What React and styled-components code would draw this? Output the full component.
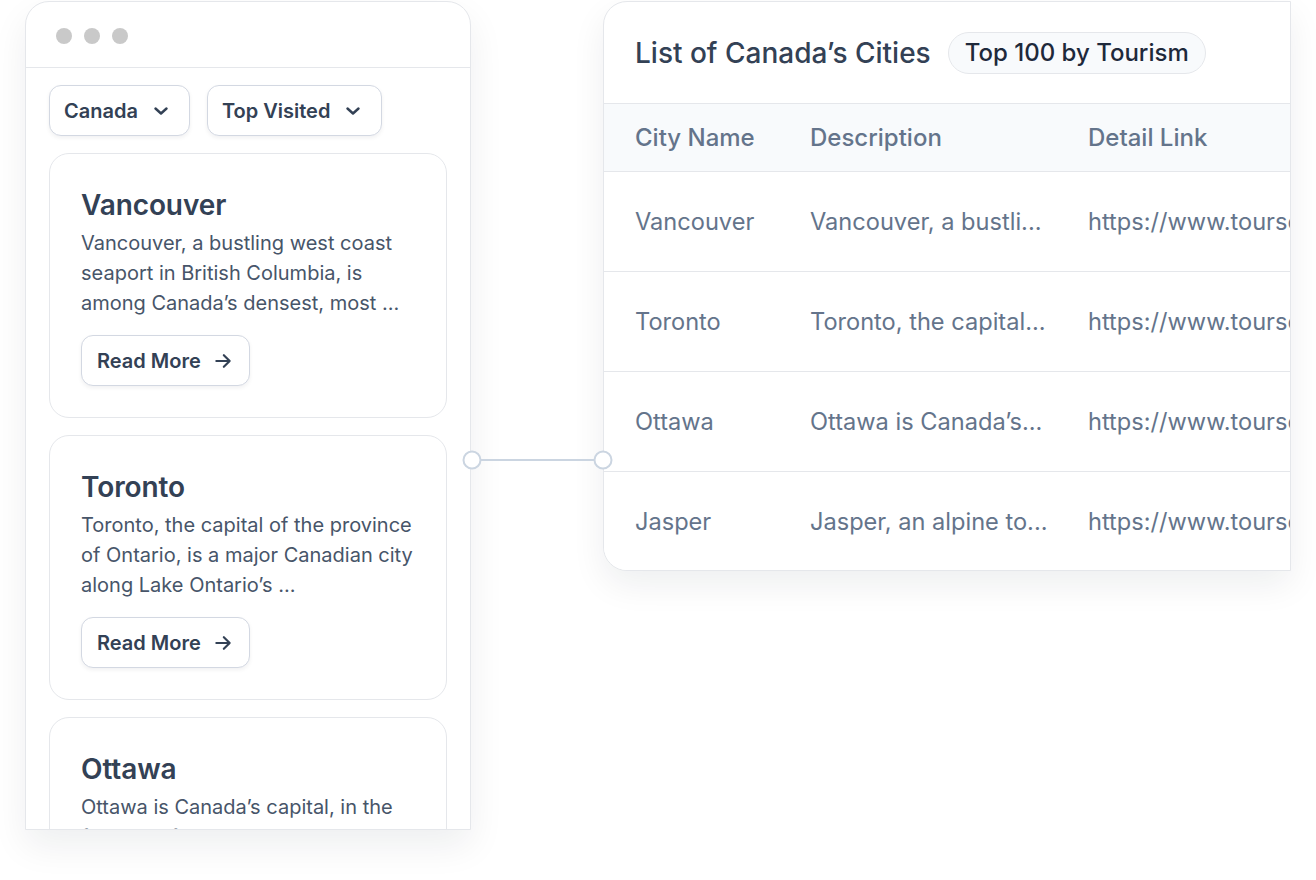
import React from "react";
import styled, { createGlobalStyle } from "styled-components";

const GlobalStyle = createGlobalStyle`
    html, body {
        margin: 0;
        padding: 0;
        background: #ffffff;
        font-family: Inter, "Noto Sans", "Liberation Sans", sans-serif;
        -webkit-font-smoothing: antialiased;
    }
`;

// layout
const Stage = styled.div`
    display: flex;
    align-items: flex-start;
    padding: 1px 0 0 25px;
    width: 1316px;
    height: 880px;
    box-sizing: border-box;
    overflow: hidden;
`;

// left mobile panel
const Phone = styled.section`
    flex: 0 0 446px;
    height: 829px;
    box-sizing: border-box;
    border: 1.5px solid #e5e7eb;
    border-radius: 24px 24px 0 0;
    background: #fff;
    box-shadow: 0 16px 36px rgba(15, 23, 42, 0.07);
    display: flex;
    flex-direction: column;
    overflow: hidden;
`;

const WindowBar = styled.div`
    height: 66px;
    flex: 0 0 66px;
    box-sizing: border-box;
    border-bottom: 1.5px solid #e5e7eb;
    display: flex;
    align-items: center;
    gap: 12px;
    padding: 2px 0 0 30px;
`;

const Dot = styled.span`
    width: 16px;
    height: 16px;
    border-radius: 50%;
    background: #c9c9c9;
`;

const Filters = styled.div`
    display: flex;
    gap: 17px;
    padding: 17px 23px 17px;
`;

const Dropdown = styled.button`
    display: flex;
    align-items: center;
    gap: 16px;
    height: 51px;
    padding: 0 21px 0 14px;
    border: 1.5px solid #d3d8e2;
    border-radius: 12px;
    background: #fff;
    box-shadow: 0 2px 4px rgba(15, 23, 42, 0.06);
    font-family: inherit;
    font-size: 20px;
    font-weight: 600;
    color: #334155;
`;

const CardList = styled.div`
    display: flex;
    flex-direction: column;
    gap: 17px;
    padding: 0 23px;
`;

const Card = styled.article`
    flex: 0 0 auto;
    border: 1.5px solid #e5e7eb;
    border-radius: 20px;
    padding: 33px 31px 31px;
    background: #fff;
`;

const CardTitle = styled.h3`
    margin: 0;
    font-size: 28px;
    line-height: 36px;
    font-weight: 600;
    color: #334155;
    letter-spacing: -0.1px;
`;

const CardText = styled.p`
    margin: 5px 0 0;
    font-size: 20px;
    line-height: 30px;
    color: #475569;
`;

const ReadMore = styled.button`
    margin-top: 17px;
    display: inline-flex;
    align-items: center;
    gap: 12px;
    height: 51px;
    padding: 0 16px 0 15px;
    border: 1.5px solid #d3d8e2;
    border-radius: 12px;
    background: #fff;
    box-shadow: 0 2px 4px rgba(15, 23, 42, 0.06);
    font-family: inherit;
    font-size: 20px;
    font-weight: 600;
    color: #334155;
`;

// connector
const Connector = styled.svg`
    flex: 0 0 auto;
    margin: 449px -13px 0 -9px;
    position: relative;
    z-index: 2;
    overflow: visible;
`;

// right table panel
const TablePanel = styled.section`
    flex: 0 0 688px;
    height: 570px;
    box-sizing: border-box;
    border: 1.5px solid #e5e7eb;
    border-radius: 24px 0 0 24px;
    background: #fff;
    box-shadow: 0 14px 34px rgba(15, 23, 42, 0.07);
    overflow: hidden;
`;

const TableHead = styled.div`
    height: 101px;
    box-sizing: border-box;
    display: flex;
    align-items: center;
    gap: 17px;
    padding: 0 31px;
`;

const TableTitle = styled.h2`
    margin: 0;
    font-size: 28px;
    font-weight: 500;
    color: #334155;
    white-space: nowrap;
`;

const Pill = styled.span`
    display: inline-flex;
    align-items: center;
    height: 42px;
    box-sizing: border-box;
    padding: 0 16px;
    border: 1.5px solid #e5e7eb;
    border-radius: 999px;
    background: #f8fafc;
    font-size: 24px;
    font-weight: 500;
    color: #1e293b;
    white-space: nowrap;
`;

const Row = styled.div`
    display: grid;
    grid-template-columns: 175px 278px 1fr;
    align-items: center;
    height: ${(p) => (p.$head ? "68px" : "100px")};
    box-sizing: border-box;
    padding-left: 31px;
    border-top: 1.5px solid #e5e7eb;
    background: ${(p) => (p.$head ? "#f8fafc" : "#fff")};
    font-size: ${(p) => (p.$head ? "24px" : "23.6px")};
    font-weight: ${(p) => (p.$head ? 500 : 400)};
    color: #64748b;
    white-space: nowrap;
    overflow: hidden;
`;

const Cell = styled.span`
    overflow: hidden;
`;

const Chevron = () => (
    <svg width="14" height="8" viewBox="0 0 14 8" fill="none" stroke="#334155" strokeWidth="2.4" strokeLinecap="round" strokeLinejoin="round">
        <path d="M1.5 1.5l5.5 5 5.5-5" />
    </svg>
);

const Arrow = () => (
    <svg width="20" height="20" viewBox="0 0 24 24" fill="none" stroke="#334155" strokeWidth="2.6" strokeLinecap="round" strokeLinejoin="round">
        <path d="M4 12h16M13 5l7 7-7 7" />
    </svg>
);

const cards = [
    {
        title: "Vancouver",
        text: "Vancouver, a bustling west coast seaport in British Columbia, is among Canada’s densest, most ...",
    },
    {
        title: "Toronto",
        text: "Toronto, the capital of the province of Ontario, is a major Canadian city along Lake Ontario’s ...",
    },
    {
        title: "Ottawa",
        text: "Ottawa is Canada’s capital, in the far east of southern Ontario, near the city of Montréal ...",
    },
];

const rows = [
    ["Vancouver", "Vancouver, a bustli...", "https://www.tourscanada.com/vancouver"],
    ["Toronto", "Toronto, the capital...", "https://www.tourscanada.com/toronto"],
    ["Ottawa", "Ottawa is Canada’s...", "https://www.tourscanada.com/ottawa"],
    ["Jasper", "Jasper, an alpine to...", "https://www.tourscanada.com/jasper"],
];

export default function App() {
    return (
        <>
            <GlobalStyle />
            <Stage>
                <Phone>
                    <WindowBar>
                        <Dot />
                        <Dot />
                        <Dot />
                    </WindowBar>
                    <Filters>
                        <Dropdown>
                            Canada
                            <Chevron />
                        </Dropdown>
                        <Dropdown>
                            Top Visited
                            <Chevron />
                        </Dropdown>
                    </Filters>
                    <CardList>
                        {cards.map((c) => (
                            <Card key={c.title}>
                                <CardTitle>{c.title}</CardTitle>
                                <CardText>{c.text}</CardText>
                                <ReadMore>
                                    Read More
                                    <Arrow />
                                </ReadMore>
                            </Card>
                        ))}
                    </CardList>
                </Phone>
                <Connector width="154" height="20" viewBox="0 0 154 20">
                    <line x1="19" y1="10" x2="134" y2="10" stroke="#cbd5e1" strokeWidth="2" />
                    <circle cx="10" cy="10" r="8.5" fill="#fff" stroke="#cbd5e1" strokeWidth="2" />
                    <circle cx="141" cy="10" r="8.5" fill="#fff" stroke="#cbd5e1" strokeWidth="2" />
                </Connector>
                <TablePanel>
                    <TableHead>
                        <TableTitle>List of Canada’s Cities</TableTitle>
                        <Pill>Top 100 by Tourism</Pill>
                    </TableHead>
                    <Row $head>
                        <Cell>City Name</Cell>
                        <Cell>Description</Cell>
                        <Cell>Detail Link</Cell>
                    </Row>
                    {rows.map((r) => (
                        <Row key={r[0]}>
                            <Cell>{r[0]}</Cell>
                            <Cell>{r[1]}</Cell>
                            <Cell>{r[2]}</Cell>
                        </Row>
                    ))}
                </TablePanel>
            </Stage>
        </>
    );
}
